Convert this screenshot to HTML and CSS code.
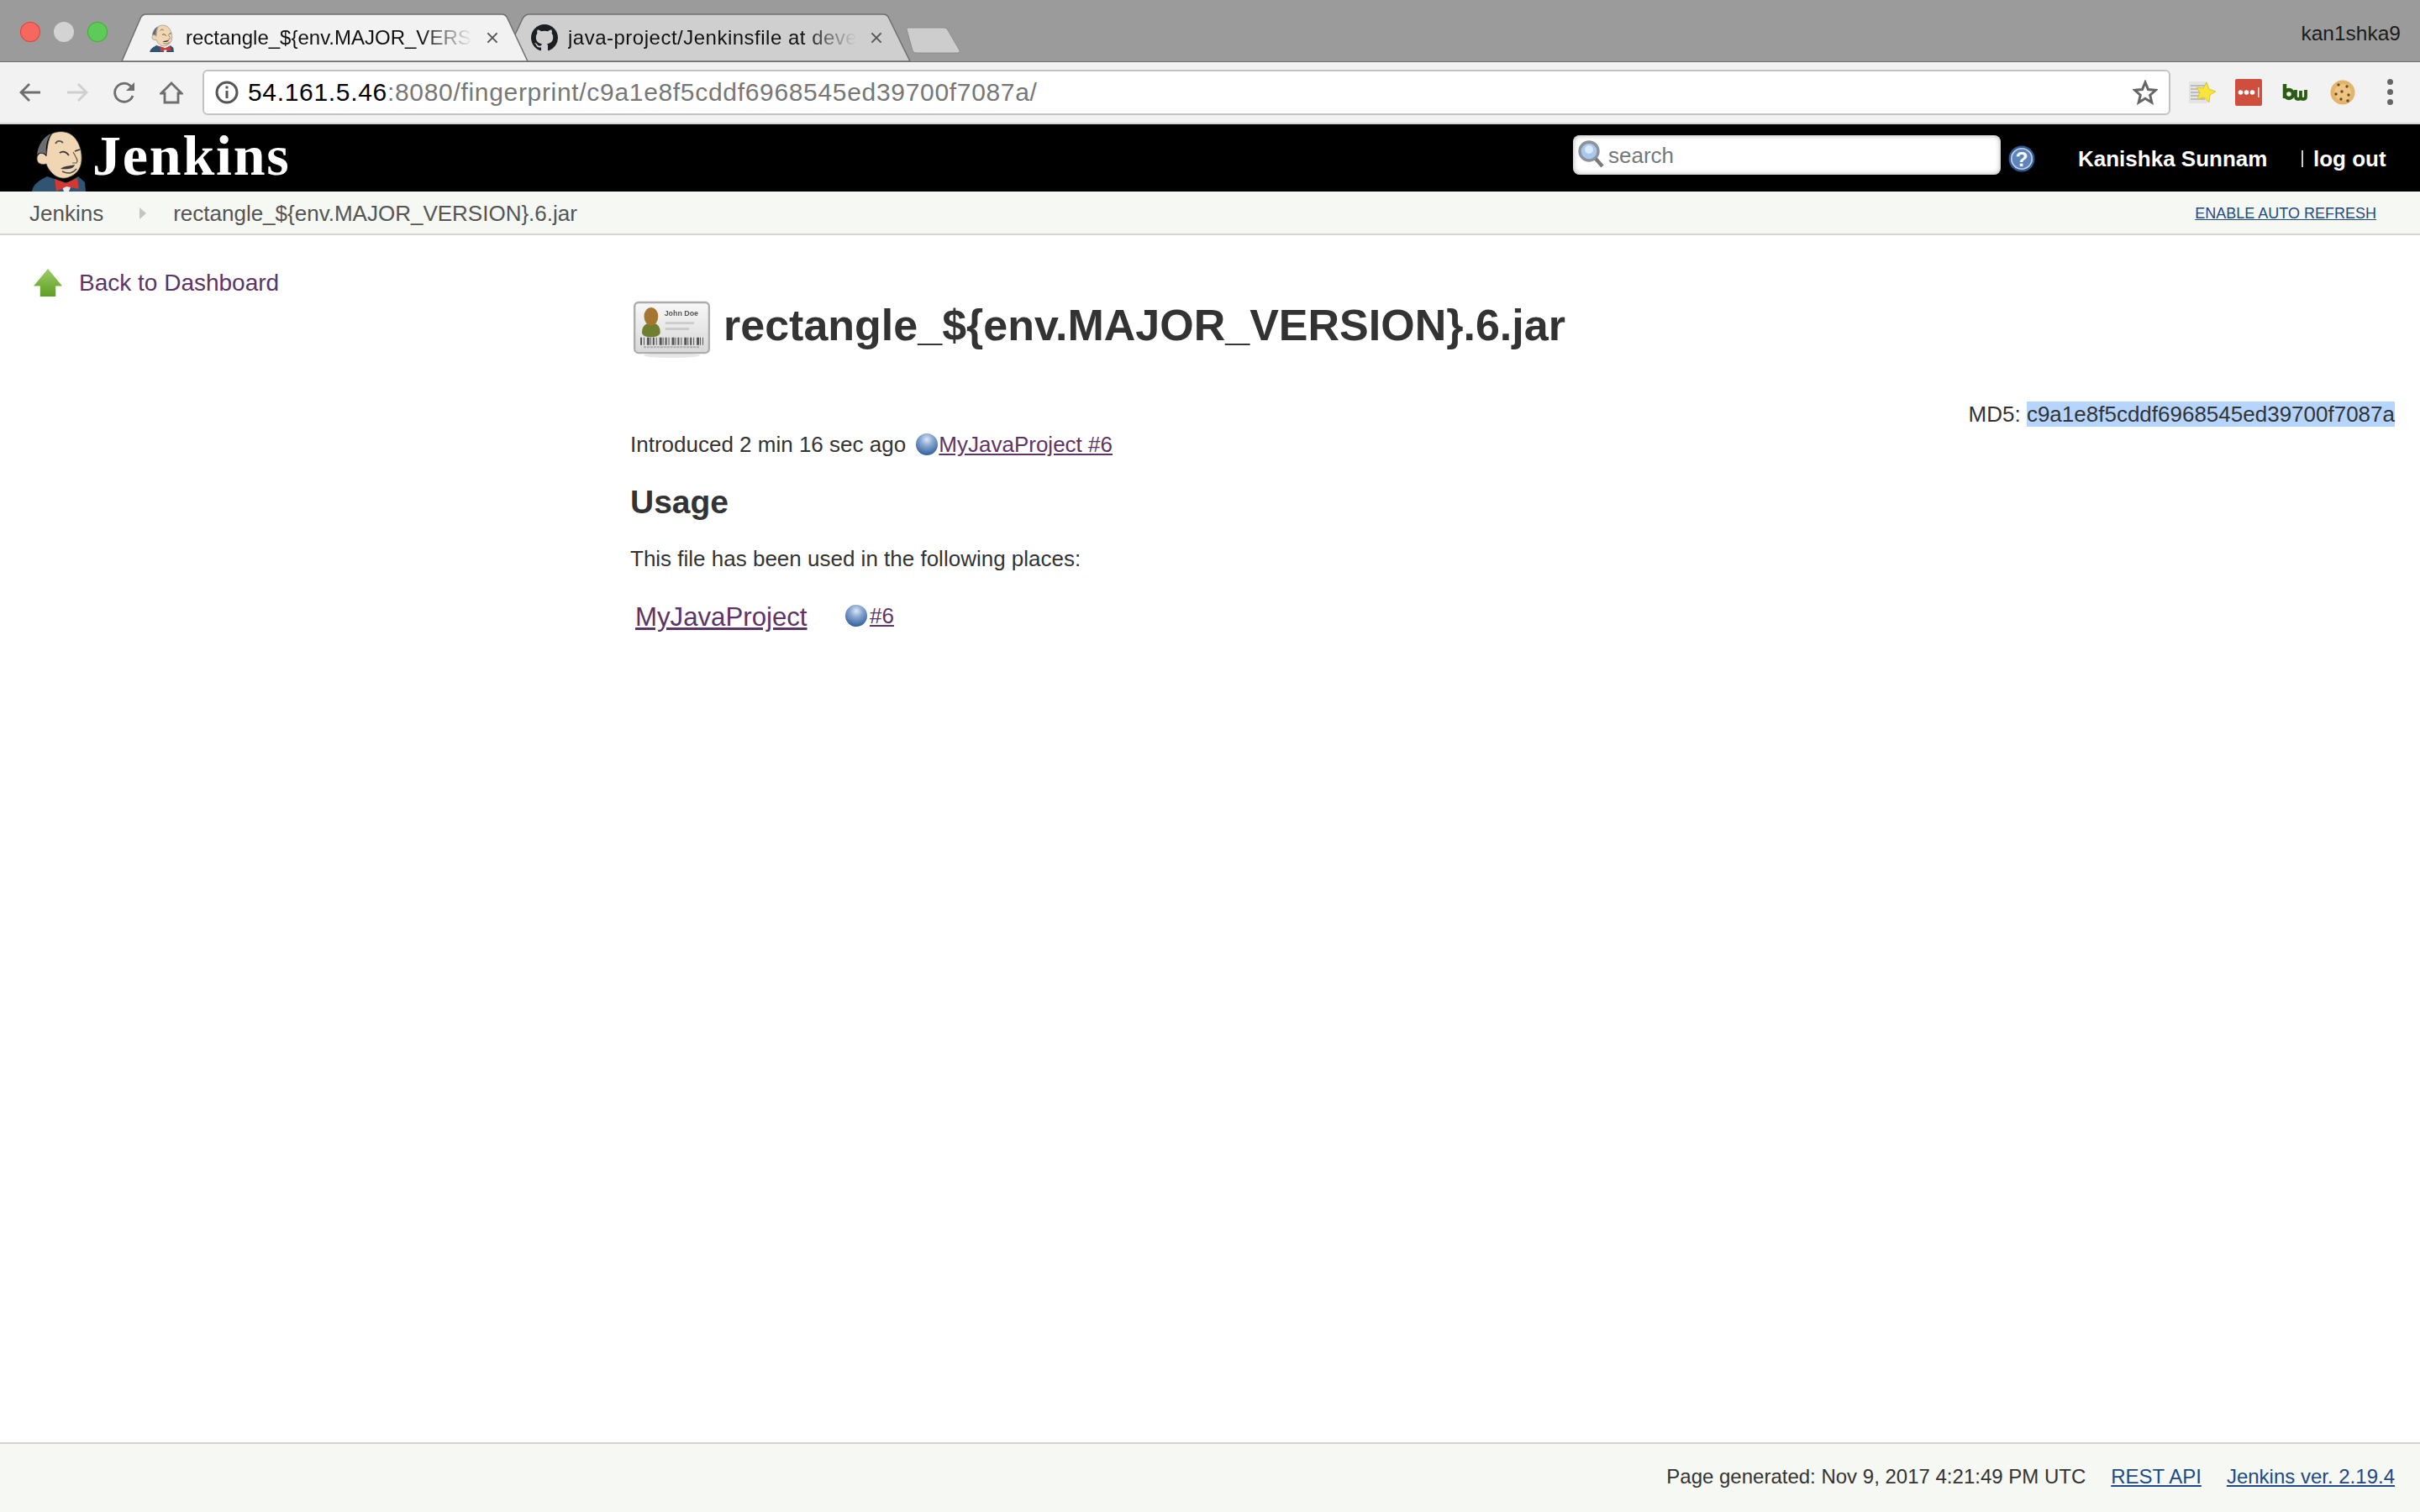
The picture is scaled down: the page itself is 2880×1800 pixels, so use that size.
FILE: index.html
```html
<!DOCTYPE html>
<html lang="en">
<head>
<meta charset="utf-8">
<title>rectangle_${env.MAJOR_VERSION}.6.jar</title>
<link rel="stylesheet" href="styles.css">
</head>
<body>
<div class="tabstrip">
  <svg class="tabshapes" width="1160" height="74" viewBox="0 0 1160 74">
    <path d="M598 73 L622 22 Q625 17 630 17 L1051 17 Q1056 17 1058 22 L1083 73 Z" fill="#cfcfcf" stroke="#6f6f6f" stroke-width="1.5"/>
    <path d="M1079 35 Q1078 33 1081 33 L1124 33 Q1127 33 1128 36 L1142 60 Q1143 63 1140 63 L1090 63 Q1087 63 1086 60 Z" fill="#cdcdcd" stroke="#8d8d8d"/>
    <path d="M145 73 L167 22 Q169 17 174 17 L597 17 Q602 17 604 22 L628 73 Z" fill="#f2f2f2" stroke="#6f6f6f" stroke-width="1.5"/>
  </svg>
  <div class="lights">
    <span class="light light-red"></span>
    <span class="light light-gray"></span>
    <span class="light light-green"></span>
  </div>
  <div class="tab tab-active">
    <svg class="favicon" viewBox="6 4 70 76"><use href="#jenkins-head"/></svg>
    <span class="tab-title">rectangle_${env.MAJOR_VERSI</span>
    <svg class="tab-close" viewBox="0 0 20 20"><path d="M3 3L17 17M17 3L3 17"/></svg>
  </div>
  <div class="tab tab-second">
    <svg class="favicon" viewBox="0 0 16 16"><path fill="#1b1f23" d="M8 0C3.58 0 0 3.58 0 8c0 3.54 2.29 6.53 5.47 7.59.4.07.55-.17.55-.38 0-.19-.01-.82-.01-1.49-2.01.37-2.53-.49-2.69-.94-.09-.23-.48-.94-.82-1.13-.28-.15-.68-.52-.01-.53.63-.01 1.08.58 1.23.82.72 1.21 1.87.87 2.33.66.07-.52.28-.87.51-1.07-1.78-.2-3.64-.89-3.64-3.95 0-.87.31-1.59.82-2.15-.08-.2-.36-1.02.08-2.12 0 0 .67-.21 2.2.82.64-.18 1.32-.27 2-.27.68 0 1.36.09 2 .27 1.53-1.04 2.2-.82 2.2-.82.44 1.1.16 1.92.08 2.12.51.56.82 1.27.82 2.15 0 3.07-1.87 3.75-3.65 3.95.29.25.54.73.54 1.48 0 1.07-.01 1.93-.01 2.2 0 .21.15.46.55.38A8.013 8.013 0 0016 8c0-4.42-3.58-8-8-8z"/></svg>
    <span class="tab-title">java-project/Jenkinsfile at deve</span>
    <svg class="tab-close" viewBox="0 0 20 20"><path d="M3 3L17 17M17 3L3 17"/></svg>
  </div>
  <span class="profile">kan1shka9</span>
</div>

<div class="toolbar">
  <svg class="nav-icon" viewBox="0 0 28 28"><path d="M26 14H3M13 4L3 14L13 24"/></svg>
  <svg class="nav-icon nav-disabled" viewBox="0 0 28 28"><path d="M2 14H25M15 4L25 14L15 24"/></svg>
  <svg class="nav-icon" viewBox="0 0 28 28"><path d="M24 18A11 11 0 1 1 21 6L25 10"/><path class="nav-fill" d="M26 2V12H16Z"/></svg>
  <svg class="nav-icon" viewBox="0 0 28 28"><path d="M14 3L2 15H6V26H22V15H26Z"/></svg>
  <div class="omnibox">
    <svg class="info" viewBox="0 0 28 28"><circle cx="14" cy="14" r="12"/><path d="M14 12V21"/><path d="M14 6.5V9.5"/></svg>
    <span class="url"><span class="url-host">54.161.5.46</span>:8080/fingerprint/c9a1e8f5cddf6968545ed39700f7087a/</span>
    <svg class="star" viewBox="0 0 30 30"><path d="M15 3L18.5 11.5L27.5 12.3L20.7 18.2L22.8 27L15 22.3L7.2 27L9.3 18.2L2.5 12.3L11.5 11.5Z"/></svg>
  </div>
  <div class="extensions">
    <svg class="ext ext-doc" viewBox="0 0 34 30">
      <rect x="1" y="2" width="22" height="26" fill="#e4e4e4"/>
      <path d="M3 7H20M3 11H20M3 15H20M3 19H20M3 23H20" stroke="#bdbdbd" stroke-width="2"/>
      <path d="M22 3L25 11L33 14L26 18L25 27L19 21L11 23L14 15L10 9L18 10Z" fill="#f7e43c" stroke="#d9c62a"/>
    </svg>
    <svg class="ext ext-lastpass" viewBox="0 0 32 32">
      <rect width="32" height="32" rx="2" fill="#cf4f3f"/>
      <circle cx="6.5" cy="16" r="2.8" fill="#fff"/><circle cx="13.5" cy="16" r="2.8" fill="#fff"/><circle cx="20.5" cy="16" r="2.8" fill="#fff"/>
      <rect x="27" y="10" width="1.5" height="12" fill="#fff"/>
    </svg>
    <svg class="ext ext-bw" viewBox="0 0 32 20">
      <path d="M3 0V17M3 12A5 5 0 1 0 13 12A5 5 0 1 0 3 12" fill="none" stroke="#2a5d12" stroke-width="4.4"/>
      <path d="M16 7V15Q16 18 19 18Q22 18 22 15V8V15Q22 18 25 18Q28 18 28 15V7" fill="none" stroke="#2a5d12" stroke-width="3.8"/>
    </svg>
    <svg class="ext ext-cookie" viewBox="0 0 30 30">
      <circle cx="15" cy="15" r="14.5" fill="#e3b56b"/>
      <circle cx="15" cy="15" r="10" fill="#eec583"/>
      <g fill="#6b4a24"><circle cx="10" cy="6" r="1.7"/><circle cx="20" cy="8" r="1.7"/><circle cx="14" cy="14" r="1.7"/><circle cx="7" cy="17" r="1.7"/><circle cx="22" cy="18" r="1.7"/><circle cx="13" cy="23" r="1.7"/><circle cx="21" cy="25" r="1.7"/></g>
    </svg>
    <div class="menu-dots"><span></span><span></span><span></span></div>
  </div>
</div>

<header class="jenkins-header">
  <svg class="logo" viewBox="0 0 80 80">
    <g id="jenkins-head">
      <path d="M8 80C9 72 16 67 26 62L50 70L63 62L71 69L72 80Z" fill="#2f5573"/>
      <path d="M42 70L56 70L52 80H46Z" fill="#e8e8e8"/>
      <path d="M18 47C14 46 13 40 15 37C17 33 23 34 25 38C26 34 26 18 32 11C40 7 52 8 58 15C65 22 68 34 67 44C66 54 60 60 52 63C44 66 36 63 31 57C28 54 26 50 25 47C23 48 20 48 18 47Z" fill="#f0d6b3" stroke="#3b3b3b" stroke-width=".8"/>
      <path d="M31 11C22 14 15 25 14 37C16 33 21 33 25 36C24 26 26 17 31 11Z" fill="#6b6d70"/>
      <path d="M36 23C38 19 42 19 45 22" fill="none" stroke="#555" stroke-width="1.8"/>
      <path d="M41 34C45 31 49 33 52 37" fill="none" stroke="#333" stroke-width="1.8"/>
      <path d="M59 32L65 30" fill="none" stroke="#333" stroke-width="1.6"/>
      <path d="M57 33C60 39 64 43 61 46L56 46" fill="none" stroke="#67594a" stroke-width="1.2"/>
      <path d="M42 53C47 49 52 50 59 48C58 53 50 54 42 53Z" fill="#3a3a3a"/>
      <path d="M44 56C50 59 56 59 61 53" fill="none" stroke="#4a4a4a" stroke-width="1.4"/>
      <path d="M35 65L48 70L62 64L64 77L49 74L37 80Z" fill="#d33833"/>
    </g>
  </svg>
  <span class="brand">Jenkins</span>
  <div class="search">
    <svg class="search-icon" viewBox="0 0 32 34">
      <circle cx="13" cy="13" r="11" fill="#a9c8ec" stroke="#8c939b" stroke-width="3.4"/>
      <circle cx="13" cy="11" r="5" fill="#dbe9f8"/>
      <path d="M21 22L29 31" stroke="#7a7a7a" stroke-width="4.4"/>
    </svg>
    <span class="search-text">search</span>
  </div>
  <svg class="help" viewBox="0 0 30 30">
    <circle cx="15" cy="15" r="14.5" fill="#2f5a94"/>
    <circle cx="15" cy="15" r="11.5" fill="#5e84bb" stroke="#c6d4e8" stroke-width="1.5"/>
    <text x="15" y="23" class="help-mark">?</text>
  </svg>
  <span class="user">Kanishka Sunnam</span>
  <span class="logout"><span class="logout-sep"></span>log out</span>
</header>

<nav class="breadcrumbs">
  <span>Jenkins</span>
  <span class="crumb-arrow"></span>
  <span>rectangle_${env.MAJOR_VERSION}.6.jar</span>
  <a class="auto-refresh" href="#">ENABLE AUTO REFRESH</a>
</nav>

<div class="page">
  <aside class="sidebar">
    <a class="task" href="#">
      <svg class="task-icon" viewBox="0 0 36 36">
        <defs><linearGradient id="arrow-fill" x1="0" y1="0" x2="0" y2="1"><stop offset="0" stop-color="#9ccc66"/><stop offset="1" stop-color="#5e9e22"/></linearGradient></defs>
        <path d="M17.5 0L35 21H27V34H8V21H0Z" fill="url(#arrow-fill)"/>
      </svg>
      Back to Dashboard
    </a>
  </aside>
  <main class="content">
    <div class="title-row">
      <svg class="card" viewBox="0 0 95 70">
        <defs><linearGradient id="card-fill" x1="0" y1="0" x2="0" y2="1"><stop offset="0" stop-color="#f8f8f8"/><stop offset="1" stop-color="#d8d8d8"/></linearGradient></defs>
        <ellipse cx="47" cy="66" rx="34" ry="3" fill="#e6e6e6"/>
        <rect x="2" y="2" width="90" height="61" rx="5" fill="url(#card-fill)" stroke="#adadad" stroke-width="2.4"/>
        <path d="M11 38C11 29 18 27 22 27C27 27 33 29 33 38C33 42 28 44 22 44C15 44 11 42 11 38Z" fill="#6f7f30"/>
        <ellipse cx="22" cy="19" rx="8.5" ry="11" fill="#a5762f"/>
        <text x="38" y="18" class="card-name">John Doe</text>
        <path d="M39 27H74M39 34H68" stroke="#cccccc" stroke-width="3"/>
        <path d="M9 49H85" stroke="#555" stroke-width="9" stroke-dasharray="2 2 1 3 3 1 1 2"/>
        <path d="M13 56H81" stroke="#aaa" stroke-width="2" stroke-dasharray="3 1"/>
      </svg>
      <h1 class="title">rectangle_${env.MAJOR_VERSION}.6.jar</h1>
    </div>
    <div class="md5">MD5: <span class="selected">c9a1e8f5cddf6968545ed39700f7087a</span></div>
    <div class="introduced">Introduced 2 min 16 sec ago <span class="ball ball-intro"></span><a class="visited" href="#">MyJavaProject #6</a></div>
    <h2 class="usage">Usage</h2>
    <p class="usage-intro">This file has been used in the following places:</p>
    <div class="usage-row">
      <a class="visited usage-job" href="#">MyJavaProject</a>
      <span class="ball ball-usage"></span><a class="visited usage-build" href="#">#6</a>
    </div>
  </main>
</div>

<footer class="footer">
  <span>Page generated: Nov 9, 2017 4:21:49 PM UTC</span>
  <a class="footer-link" href="#">REST API</a>
  <a class="footer-link" href="#">Jenkins ver. 2.19.4</a>
</footer>
</body>
</html>
```

FILE: styles.css
```css
* { box-sizing: border-box; }
html, body { height: 100%; }
body {
  margin: 0;
  display: flex;
  flex-direction: column;
  height: 1800px;
  font-family: "Liberation Sans", Arial, sans-serif;
  font-size: 26px;
  color: #333;
  background: #fff;
  overflow: hidden;
}
a { color: #204a87; }
a.visited { color: #5c3566; }

/* browser chrome */
.tabstrip {
  position: relative;
  height: 74px;
  flex: none;
  display: flex;
  align-items: center;
  padding-top: 17px;
  background: #9b9b9b;
  border-bottom: 1px solid #6f6f6f;
}
.tabshapes { position: absolute; left: 0; top: 0; }
.lights {
  position: relative;
  display: flex;
  gap: 16px;
  padding-left: 24px;
  width: 177px;
  margin-top: -14px;
}
.light { width: 24px; height: 24px; border-radius: 50%; }
.light-red { background: #f5675f; box-shadow: inset 0 0 0 1px #d8473f; }
.light-gray { background: #d3d3d3; }
.light-green { background: #5ccb57; box-shadow: inset 0 0 0 1px #45ab40; }
.tab {
  position: relative;
  display: flex;
  align-items: center;
  gap: 12px;
  font-size: 24px;
  color: #111;
}
.tab-active { width: 417px; }
.tab-second { width: 419px; margin-left: 38px; }
.tab-second .tab-title { letter-spacing: 0.5px; }
.favicon { width: 32px; height: 34px; flex: none; }
.tab-title {
  flex: 1;
  min-width: 0;
  white-space: nowrap;
  -webkit-mask-image: linear-gradient(to right, #000 82%, transparent 100%);
  mask-image: linear-gradient(to right, #000 82%, transparent 100%);
}
.tab-close { width: 16px; height: 16px; flex: none; margin-left: 4px; }
.tab-close path { fill: none; stroke: #555; stroke-width: 2.4; }
.profile {
  position: relative;
  margin-left: auto;
  margin-top: -10px;
  padding-right: 23px;
  font-size: 24.5px;
  color: #1c1c1c;
}
.toolbar {
  height: 74px;
  flex: none;
  display: flex;
  align-items: center;
  padding: 0 0 1px 22px;
  gap: 28px;
  background: #f2f2f2;
  border-bottom: 2px solid #d6d6d6;
}
.nav-icon { width: 28px; height: 28px; flex: none; }
.nav-icon path { fill: none; stroke: #6e6e6e; stroke-width: 2.8; }
.nav-icon .nav-fill { fill: #6e6e6e; stroke: none; }
.nav-disabled path { stroke: #cfcfcf; }
.omnibox {
  width: 2342px;
  height: 54px;
  margin-left: -5px;
  display: flex;
  align-items: center;
  padding: 0 13px;
  background: #fff;
  border: 2px solid #c2c2c2;
  border-radius: 6px;
}
.info { width: 28px; height: 28px; flex: none; }
.info circle, .info path { fill: none; stroke: #555; stroke-width: 3; }
.url {
  flex: 1;
  margin-left: 11px;
  font-size: 30px;
  letter-spacing: 0.68px;
  color: #777;
  white-space: nowrap;
}
.url-host { color: #000; }
.star { width: 30px; height: 30px; flex: none; }
.star path { fill: none; stroke: #666; stroke-width: 3; }
.extensions {
  display: flex;
  align-items: center;
  margin-left: -7px;
}
.ext { flex: none; }
.ext-doc { width: 34px; height: 30px; filter: blur(0.4px); }
.ext-lastpass { width: 32px; height: 32px; margin-left: 22px; }
.ext-bw { width: 32px; height: 20px; margin-left: 24px; }
.ext-cookie { width: 30px; height: 30px; margin-left: 25px; filter: blur(0.4px); }
.menu-dots {
  display: flex;
  flex-direction: column;
  gap: 5px;
  margin-left: 38px;
}
.menu-dots span { width: 7px; height: 7px; border-radius: 50%; background: #666; }

/* jenkins header */
.jenkins-header {
  height: 80px;
  flex: none;
  display: flex;
  align-items: center;
  background: #000;
  color: #fff;
  padding-left: 30px;
}
.logo { width: 80px; height: 80px; flex: none; filter: blur(0.5px); }
.brand {
  font-family: "Liberation Serif", "Times New Roman", serif;
  font-weight: bold;
  font-size: 68px;
  letter-spacing: 1.8px;
  margin-top: -6px;
  width: 1762px;
}
.search {
  width: 509px;
  height: 47px;
  margin-top: -8px;
  display: flex;
  align-items: center;
  gap: 4px;
  padding-left: 6px;
  background: #fff;
  border-radius: 8px;
  box-shadow: inset 0 0 6px #a8a8a8;
}
.search-icon { width: 32px; height: 34px; flex: none; filter: blur(0.4px); }
.search-text { font-size: 26px; color: #777; padding-top: 2px; }
.help { width: 32px; height: 32px; flex: none; margin: 0 0 -2px 9px; }
.help-mark { font: bold 23px "Liberation Sans", sans-serif; fill: #fff; text-anchor: middle; }
.user {
  margin: 2px 0 0 51px;
  font-size: 26px;
  font-weight: bold;
  width: 266px;
  white-space: nowrap;
}
.logout {
  display: flex;
  align-items: center;
  gap: 12px;
  margin-top: 2px;
  font-size: 26px;
  font-weight: bold;
  white-space: nowrap;
}
.logout-sep { width: 2px; height: 20px; background: #ccc; }

/* breadcrumbs */
.breadcrumbs {
  height: 52px;
  flex: none;
  display: flex;
  align-items: center;
  padding: 2px 52px 0 35px;
  background: #f6f8f3;
  border-bottom: 2px solid #d3d7cf;
  color: #555;
  font-size: 26px;
}
.crumb-arrow {
  width: 0;
  height: 0;
  margin: 0 32px 0 43px;
  border-left: 8px solid #c4c6c2;
  border-top: 7px solid transparent;
  border-bottom: 7px solid transparent;
}
.auto-refresh { margin-left: auto; font-size: 18px; }

/* page */
.page { flex: 1; display: flex; min-height: 0; }
.sidebar { width: 750px; flex: none; padding: 39px 0 0 40px; }
.task {
  display: flex;
  align-items: center;
  gap: 19px;
  height: 36px;
  font-size: 28px;
  color: #5c3566;
  text-decoration: none;
}
.task-icon { width: 35px; height: 35px; flex: none; filter: blur(0.4px); }
.content { flex: 1; min-width: 0; padding: 72px 30px 0 0; }
.title-row { display: flex; align-items: center; height: 70px; }
.card { width: 94px; height: 69px; flex: none; filter: blur(0.7px); margin: 10px 0 0 3px; }
.card-name { font: bold 9px "Liberation Sans", sans-serif; fill: #555; }
.title { margin: 0 0 0 14px; font-size: 52px; font-weight: bold; line-height: 70px; color: #333; white-space: nowrap; }
.md5 { margin-top: 56px; text-align: right; line-height: 30px; }
.selected { display: inline-block; background: #b5d5ff; }
.introduced { margin-top: 6px; line-height: 30px; display: flex; align-items: center; white-space: pre; }
.ball {
  width: 26px;
  height: 26px;
  flex: none;
  border-radius: 50%;
  background: radial-gradient(circle at 50% 28%, #dfe8f2 0, #8aa9d2 32%, #3a659f 78%, #2b548e 100%);
}
.ball-intro { margin-left: 5px; margin-right: 1px; }
.usage { margin: 31px 0 0; font-size: 39px; font-weight: bold; line-height: 46px; color: #333; }
.usage-intro { margin: 29px 0 0; line-height: 30px; }
.usage-row { margin-top: 35px; padding-left: 6px; height: 40px; display: flex; align-items: center; }
.usage-job { font-size: 31.2px; width: 250px; }
.usage-build { margin: -4px 0 0 3px; }
.ball-usage { margin-top: -4px; }

/* footer */
.footer {
  height: 83px;
  flex: none;
  display: flex;
  align-items: center;
  justify-content: flex-end;
  gap: 30px;
  padding: 0 30px 3px 0;
  background: #f6f8f3;
  border-top: 2px solid #d3d7cf;
  font-size: 24px;
}
```
